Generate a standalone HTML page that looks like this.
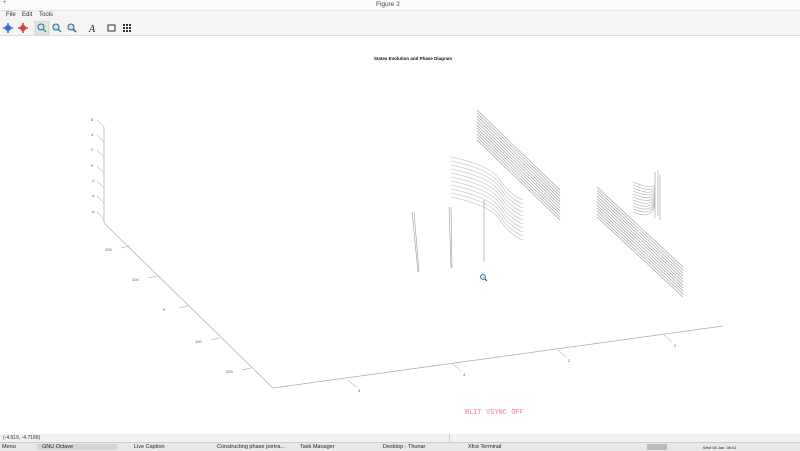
<!DOCTYPE html>
<html><head><meta charset="utf-8"><style>
body{margin:0;width:800px;height:450px;overflow:hidden;background:#fff;font-family:"Liberation Sans",sans-serif;position:relative}
.title{position:absolute;top:0;left:0;width:800px;height:10px;background:#fbfbfb;border-bottom:1px solid #e4e4e4}
.menu{position:absolute;top:11px;left:0;width:800px;height:10px;font-size:6px;color:#333;background:#f4f4f4}
.menu span{position:absolute;top:1px}
.tb{position:absolute;top:21px;left:0;width:800px;height:14px;background:#f4f4f4;border-bottom:1px solid #ddd}
.status{position:absolute;top:434px;left:0;width:800px;height:8px;background:#f2f2f2;font-size:5px;color:#333}
.task{position:absolute;top:442px;left:0;width:800px;height:8px;background:#e8e8e8;font-size:5.5px;color:#222;border-top:1px solid #ccc}
.task span{position:absolute;top:1px}
.btn{position:absolute;top:1px;height:6px;background:#d6d6d6}
</style></head><body>
<div class="title"><span style="position:absolute;left:376px;top:1px;font-size:6.5px;color:#444">Figure 2</span><span style="position:absolute;left:3px;top:0;font-size:6px;color:#666">+</span></div>
<div class="menu"><span style="left:6px">File</span><span style="left:22px">Edit</span><span style="left:39px">Tools</span></div>
<div class="tb">
<svg width="140" height="14" style="position:absolute;left:0;top:0">
<circle cx="8" cy="7" r="3" fill="#3a6fd0"/><path d="M3 7h10M8 2v10" stroke="#3a6fd0" stroke-width="1.5"/>
<circle cx="23" cy="7" r="3" fill="#d04040"/><path d="M18 7h10M23 2v10" stroke="#d04040" stroke-width="1.5"/>
<rect x="35" y="0" width="14" height="14" fill="#dfe6df" stroke="#bbb" stroke-width=".5"/>
<circle cx="41" cy="6" r="3" fill="#cfe4f5" stroke="#2a5f8a"/><path d="M43 8l3 3" stroke="#2a6" stroke-width="1.5"/>
<circle cx="56" cy="6" r="3" fill="#cfe4f5" stroke="#2a5f8a"/><path d="M58 8l3 3" stroke="#2a6" stroke-width="1.5"/>
<circle cx="71" cy="6" r="3" fill="#cfe4f5" stroke="#2a5f8a"/><path d="M73 8l3 3" stroke="#456" stroke-width="1.5"/>
<text x="89" y="11" font-size="10" font-style="italic" font-family="Liberation Serif" fill="#222">A</text>
<rect x="108" y="4" width="7" height="6" fill="none" stroke="#333"/>
<g fill="#333"><rect x="123" y="3" width="2" height="2"/><rect x="126" y="3" width="2" height="2"/><rect x="129" y="3" width="2" height="2"/><rect x="123" y="6" width="2" height="2"/><rect x="126" y="6" width="2" height="2"/><rect x="129" y="6" width="2" height="2"/><rect x="123" y="9" width="2" height="2"/><rect x="126" y="9" width="2" height="2"/><rect x="129" y="9" width="2" height="2"/></g>
</svg></div>
<svg id="p" width="800" height="400" style="position:absolute;left:0;top:36px" viewBox="0 36 800 400">
<text x="413" y="60" font-size="4.5" font-weight="bold" text-anchor="middle" fill="#111">States Evolution and Phase Diagram</text>
<g stroke="#aaa" stroke-width=".7" fill="none"><path d="M104 127V223L273 388L723 326"/></g>
<g id="ticks" stroke="#999" stroke-width=".5"></g>
<g id="lbl" font-size="4" fill="#555"></g>
<g id="lines" fill="none" stroke="#999" stroke-width=".6"></g>
<text x="465" y="414" font-size="7" fill="#f08090" font-family="Liberation Mono">BLIT  VSYNC OFF</text>
<circle cx="483" cy="277" r="2.5" fill="#cfe4f5" stroke="#2a5f8a" stroke-width=".8"/><path d="M485 279l2 2" stroke="#333"/>
</svg>
<div class="status"><span style="position:absolute;left:3px;top:1px">(-4.519, -4.7189)</span><div style="position:absolute;left:449px;top:0;width:1px;height:8px;background:#ccc"></div></div>
<div class="task">
<div class="btn" style="left:37px;width:80px"></div>
<span style="left:2px">Menu</span><span style="left:42px">GNU Octave</span><span style="left:134px">Live Caption</span><span style="left:217px">Constructing phase portra...</span><span style="left:300px">Task Manager</span><span style="left:383px">Desktop - Thunar</span><span style="left:468px">Xfce Terminal</span>
<div class="btn" style="left:647px;width:20px;background:#bbb"></div>
<span style="left:703px;font-size:4px;top:2px">Wed 08 Jan, 06:41</span>
</div>
<script>
const NS="http://www.w3.org/2000/svg";
function el(g,t,a,txt){const e=document.createElementNS(NS,t);for(const k in a)e.setAttribute(k,a[k]);if(txt)e.textContent=txt;document.getElementById(g).appendChild(e);}
[119,134,149,165,180,195,211].forEach((y,i)=>{el("ticks","line",{x1:97,y1:y+1,x2:104,y2:y+8});el("lbl","text",{x:91,y:y+2},["6","4","2","0","-2","-4","-6"][i]);});
[[130,246,"200"],[157,276,"100"],[188,306,"0"],[220,338,"100"],[251,368,"200"]].forEach(([x,y,t])=>{el("ticks","line",{x1:x-9,y1:y+2,x2:x,y2:y});el("lbl","text",{x:x-25,y:y+5},t);});
[[348,380,"4"],[453,364,"4"],[558,350,"2"],[664,335,"2"]].forEach(([x,y,t])=>{el("ticks","line",{x1:x,y1:y,x2:x+8,y2:y+7});el("lbl","text",{x:x+10,y:y+12},t);});
for(let i=0;i<11;i++){
el("lines","path",{d:`M477 ${110+3*i}L560 ${190+3*i}`});
el("lines","path",{d:`M597 ${187+3*i}L683 ${267+3*i}`});
el("lines","path",{d:`M451 ${157+4*i}Q490 ${165+4*i} 500 ${180+4*i}T523 ${200+4*i}`,stroke:"#b5b5b5"});
el("lines","path",{d:`M633 ${182+3*i}Q652 ${190+3*i} 655 ${185+2*i}`,stroke:"#aaa"});
}
el("lines","path",{d:"M655 172V218M658 170V216M660 175V220"});
el("lines","path",{d:"M412 212L418 272M414 212L419 272"});
el("lines","path",{d:"M449 207L451 268M451 207L452 268"});
el("lines","path",{d:"M484 200V262"});
</script>
</body></html>
